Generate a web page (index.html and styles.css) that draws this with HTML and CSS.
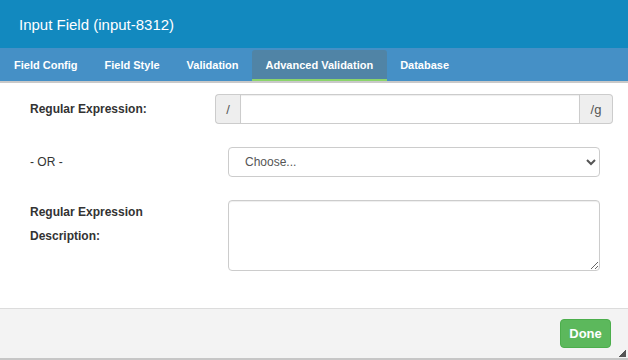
FILE: index.html
```html
<!DOCTYPE html>
<html lang="en">
<head>
    <meta charset="UTF-8">
    <title>Input Field (input-8312)</title>
    <link rel="stylesheet" href="styles.css">
</head>
<body>
    <div class="dialog">
        <div class="header">
            <h1>Input Field (input-8312)</h1>
        </div>
        <div class="tabs">
            <div class="tab">Field Config</div>
            <div class="tab">Field Style</div>
            <div class="tab">Validation</div>
            <div class="tab active">Advanced Validation</div>
            <div class="tab">Database</div>
        </div>
        <div class="form">
            <div class="row">
                <label class="label">Regular Expression:</label>
                <div class="input-group">
                    <span class="addon left">/</span>
                    <input type="text" class="input">
                    <span class="addon right">/g</span>
                </div>
            </div>
            <div class="row">
                <label class="label plain">- OR -</label>
                <select class="select">
                    <option>Choose...</option>
                </select>
            </div>
            <div class="row top">
                <label class="label">Regular Expression<br>Description:</label>
                <textarea class="textarea"></textarea>
            </div>
        </div>
        <div class="footer">
            <button class="done">Done</button>
        </div>
        <div class="grip"></div>
    </div>
</body>
</html>
```

FILE: styles.css
```css
body {
    margin: 0;
    font-family: 'Liberation Sans', Arial, sans-serif;
    background: #fff;
}
.dialog {
    position: relative;
    width: 628px;
    height: 360px;
    display: flex;
    flex-direction: column;
    overflow: hidden;
}
.header {
    background: #1289bf;
    height: 48px;
    display: flex;
    align-items: center;
    padding-left: 19px;
}
.header h1 {
    margin: 0;
    font-size: 15px;
    font-weight: normal;
    color: #fff;
    padding-top: 1px;
}
.tabs {
    display: flex;
    height: 33px;
    background: #4590c6;
    border-bottom: 2px solid #c9c9c9;
}
.tab {
    padding: 1px 13.5px 0;
    font-size: 11px;
    font-weight: bold;
    color: #fff;
    display: flex;
    align-items: center;
}
.tab:first-child {
    padding-left: 14px;
}
.tab.active {
    background: #5084a6;
    margin-top: 2px;
    padding-top: 0;
    border-radius: 3px 3px 0 0;
    border-bottom: 2px solid #8bd46b;
}
.form {
    flex: 1;
    padding: 11px 28px 0 30px;
    display: flex;
    flex-direction: column;
    gap: 23px;
}
.row {
    display: grid;
    grid-template-columns: 198px 1fr;
    align-items: center;
}
.row.top {
    align-items: start;
}
.label {
    font-size: 12px;
    font-weight: bold;
    color: #333;
    line-height: 24px;
}
.label.plain {
    font-weight: normal;
}
.input-group {
    display: flex;
    height: 30px;
    margin: 0 -13px;
}
.addon {
    background: #eee;
    border: 1px solid #ccc;
    color: #555;
    font-size: 13px;
    display: flex;
    align-items: center;
    justify-content: center;
}
.addon.left {
    width: 24px;
    border-radius: 4px 0 0 4px;
    border-right: none;
}
.addon.right {
    width: 32px;
    border-radius: 0 4px 4px 0;
    border-left: none;
}
.input {
    flex: 1;
    min-width: 0;
    border: 1px solid #ccc;
    margin: 0;
    padding: 0 10px;
    box-shadow: inset 0 1px 1px rgba(0, 0, 0, 0.07);
}
.select {
    height: 30px;
    border: 1px solid #ccc;
    border-radius: 4px;
    background: #fff;
    font-family: 'Liberation Sans', Arial, sans-serif;
    font-size: 12px;
    color: #555;
    padding: 0 10px 0 12px;
}
.textarea {
    height: 71px;
    box-sizing: border-box;
    border: 1px solid #ccc;
    border-radius: 4px;
    margin: 0;
    box-shadow: inset 0 1px 1px rgba(0, 0, 0, 0.07);
}
.footer {
    background: #f3f3f3;
    border-top: 1px solid #dcdcdc;
    border-bottom: 2px solid #c6c6c6;
    display: flex;
    justify-content: flex-end;
    align-items: flex-start;
    padding: 10px 17px 0 0;
    box-sizing: border-box;
    height: 52px;
}
.done {
    background: #5cb85c;
    border: 1px solid #4cae4c;
    border-radius: 4px;
    color: #fff;
    font-family: 'Liberation Sans', Arial, sans-serif;
    font-size: 13px;
    font-weight: bold;
    height: 29px;
    width: 51px;
    padding: 0;
}
.grip {
    position: absolute;
    right: 2px;
    bottom: 3px;
    width: 7px;
    height: 7px;
    background: linear-gradient(135deg, transparent 50%, #555 50%);
}
```
